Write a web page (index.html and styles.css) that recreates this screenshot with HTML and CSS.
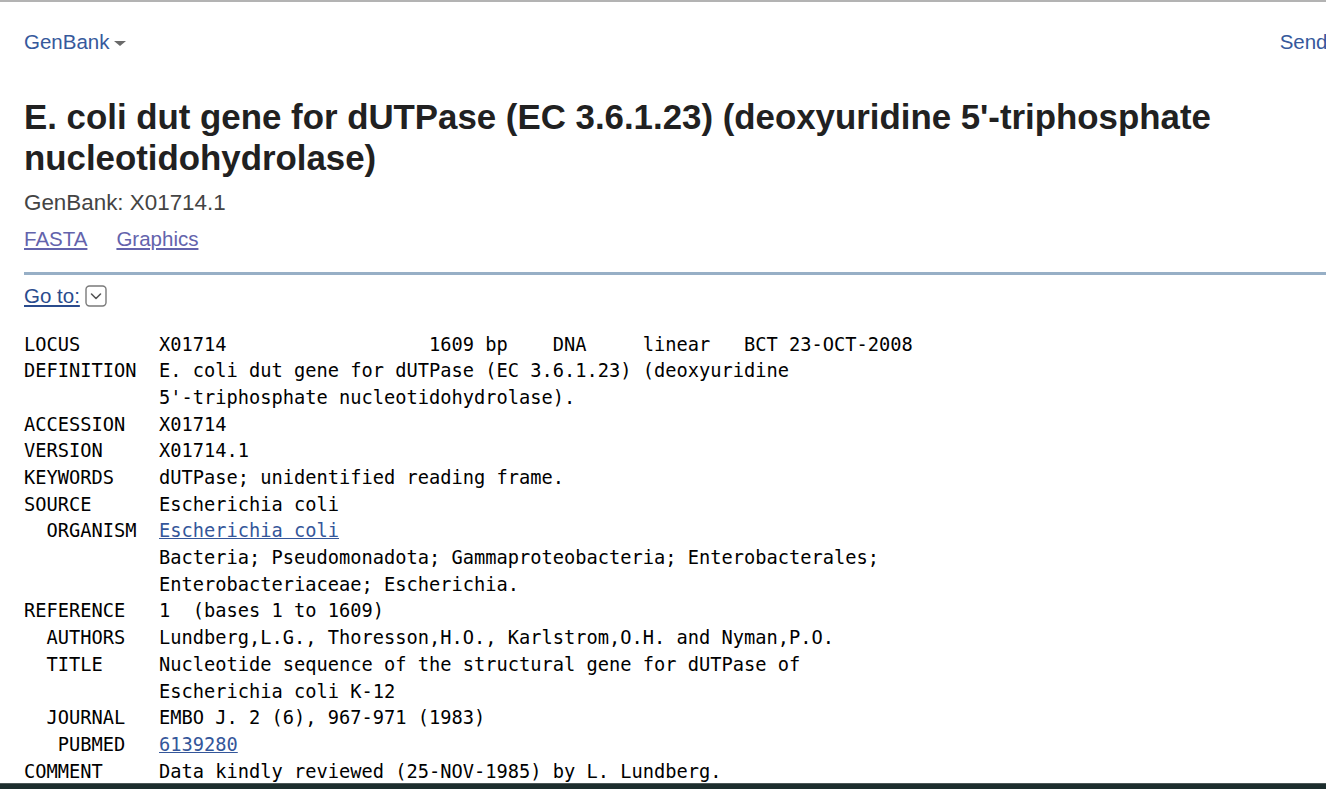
FILE: index.html
```html
<!DOCTYPE html>
<html lang="en">
<head>
<meta charset="utf-8">
<title>E. coli dut gene for dUTPase - Nucleotide - NCBI</title>
<link rel="stylesheet" href="styles.css">
</head>
<body>
<div class="topline"></div>
<div class="page">
  <header class="hdr">
    <a class="db" href="#">GenBank<span class="caret"></span></a>
    <a class="send" href="#">Send to:</a>
  </header>
  <h1 class="title">E. coli dut gene for dUTPase (EC 3.6.1.23) (deoxyuridine 5'-triphosphate nucleotidohydrolase)</h1>
  <p class="acc">GenBank: X01714.1</p>
  <div class="links"><a href="#">FASTA</a><a href="#">Graphics</a></div>
  <hr class="rule">
  <div class="goto"><a href="#">Go to:</a><svg class="goto-ico" width="22" height="22" viewBox="0 0 22 22"><rect x="1" y="1" width="20" height="20" rx="3.5" fill="#fff" stroke="#7a7a7a" stroke-width="1.4"/><path d="M6.5 9 L11 13.5 L15.5 9" fill="none" stroke="#555" stroke-width="1.6" stroke-linecap="round" stroke-linejoin="round"/></svg></div>
<pre class="flat">LOCUS       X01714                  1609 bp    DNA     linear   BCT 23-OCT-2008
DEFINITION  E. coli dut gene for dUTPase (EC 3.6.1.23) (deoxyuridine
            5'-triphosphate nucleotidohydrolase).
ACCESSION   X01714
VERSION     X01714.1
KEYWORDS    dUTPase; unidentified reading frame.
SOURCE      Escherichia coli
  ORGANISM  <a href="#">Escherichia coli</a>
            Bacteria; Pseudomonadota; Gammaproteobacteria; Enterobacterales;
            Enterobacteriaceae; Escherichia.
REFERENCE   1  (bases 1 to 1609)
  AUTHORS   Lundberg,L.G., Thoresson,H.O., Karlstrom,O.H. and Nyman,P.O.
  TITLE     Nucleotide sequence of the structural gene for dUTPase of
            Escherichia coli K-12
  JOURNAL   EMBO J. 2 (6), 967-971 (1983)
   PUBMED   <a href="#">6139280</a>
COMMENT     Data kindly reviewed (25-NOV-1985) by L. Lundberg.</pre>
</div>
<div class="footer"></div>
</body>
</html>
```

FILE: styles.css
```css
html, body {
  margin: 0;
  padding: 0;
  overflow: hidden;
  background: #fff;
}
body {
  font-family: "Liberation Sans", Arial, sans-serif;
  color: #212121;
}
.topline {
  height: 2px;
  background: #b3b3b3;
}
.page {
  padding-left: 24px;
  width: 1400px;
}
.hdr {
  display: flex;
  align-items: center;
  margin-top: 28px;
  height: 24px;
  width: 1332px;
}
.hdr a {
  font-size: 20.5px;
  line-height: 24px;
  color: #36599c;
  text-decoration: none;
}
.db {
  display: flex;
  align-items: center;
}
.caret {
  display: inline-block;
  width: 0;
  height: 0;
  margin-left: 5px;
  margin-top: 3px;
  border-left: 6px solid transparent;
  border-right: 6px solid transparent;
  border-top: 5px solid #6a6a6a;
}
.send {
  margin-left: auto;
}
.title {
  margin: 42px 0 0 0;
  font-size: 34.85px;
  line-height: 41px;
  font-weight: bold;
  color: #212121;
  width: 1240px;
}
.acc {
  margin: 11px 0 0 0;
  font-size: 22.4px;
  line-height: 28px;
  color: #444;
}
.links {
  display: flex;
  gap: 29px;
  margin-top: 8px;
  font-size: 20.5px;
  line-height: 28px;
}
.links a {
  color: #6363ac;
  text-decoration: underline;
}
.rule {
  margin: 19px 0 0 0;
  border: 0;
  height: 3px;
  background: #97afc6;
}
.goto {
  display: flex;
  align-items: center;
  gap: 5px;
  margin-top: 7px;
  height: 28px;
  font-size: 20.5px;
  line-height: 28px;
}
.goto a {
  color: #2a4b8d;
  text-decoration: underline;
}
.goto-ico {
  display: block;
}
.flat {
  margin: 21.6px 0 0 0;
  font-family: "DejaVu Sans Mono", "Liberation Mono", monospace;
  font-size: 18.7px;
  line-height: 26.69px;
  color: #000;
}
.flat a {
  color: #34569a;
  text-decoration: underline;
}
.footer {
  position: fixed;
  left: 0;
  right: 0;
  bottom: 0;
  height: 5px;
  border-top: 1px solid #4d5858;
  background: #1d2d2d;
}
```
